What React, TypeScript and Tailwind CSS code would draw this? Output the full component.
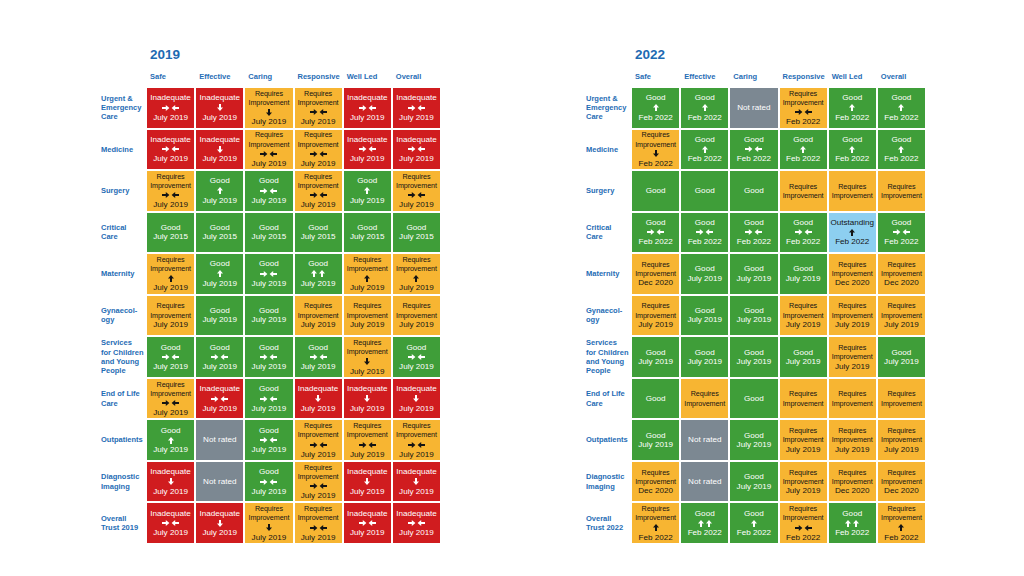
import React from 'react';

type Rating = 'I' | 'R' | 'G' | 'N' | 'O';
type Arrow = 'same' | 'up' | 'down' | 'up2' | '';
type CellData = [Rating, Arrow?, string?];

const headers = ['Safe', 'Effective', 'Caring', 'Responsive', 'Well Led', 'Overall'];

const labels2019 = [
  'Urgent &\nEmergency\nCare',
  'Medicine',
  'Surgery',
  'Critical\nCare',
  'Maternity',
  'Gynaecol-\nogy',
  'Services\nfor Children\nand Young\nPeople',
  'End of Life\nCare',
  'Outpatients',
  'Diagnostic\nImaging',
  'Overall\nTrust 2019',
];

const labels2022 = [...labels2019.slice(0, 10), 'Overall\nTrust 2022'];

const J19 = 'July 2019';
const F22 = 'Feb 2022';
const D20 = 'Dec 2020';

const grid2019: CellData[][] = [
  [['I', 'same', J19], ['I', 'down', J19], ['R', 'down', J19], ['R', 'same', J19], ['I', 'same', J19], ['I', 'same', J19]],
  [['I', 'same', J19], ['I', 'down', J19], ['R', 'same', J19], ['R', 'same', J19], ['I', 'same', J19], ['I', 'same', J19]],
  [['R', 'same', J19], ['G', 'up', J19], ['G', 'same', J19], ['R', 'same', J19], ['G', 'up', J19], ['R', 'same', J19]],
  [['G', '', 'July 2015'], ['G', '', 'July 2015'], ['G', '', 'July 2015'], ['G', '', 'July 2015'], ['G', '', 'July 2015'], ['G', '', 'July 2015']],
  [['R', 'up', J19], ['G', 'up', J19], ['G', 'same', J19], ['G', 'up2', J19], ['R', 'up', J19], ['R', 'up', J19]],
  [['R', '', J19], ['G', '', J19], ['G', '', J19], ['R', '', J19], ['R', '', J19], ['R', '', J19]],
  [['G', 'same', J19], ['G', 'same', J19], ['G', 'same', J19], ['G', 'same', J19], ['R', 'down', J19], ['G', 'same', J19]],
  [['R', 'same', J19], ['I', 'same', J19], ['G', 'same', J19], ['I', 'down', J19], ['I', 'down', J19], ['I', 'down', J19]],
  [['G', 'up', J19], ['N'], ['G', 'same', J19], ['R', 'same', J19], ['R', 'same', J19], ['R', 'same', J19]],
  [['I', 'down', J19], ['N'], ['G', 'same', J19], ['R', 'same', J19], ['I', 'down', J19], ['I', 'down', J19]],
  [['I', 'same', J19], ['I', 'down', J19], ['R', 'down', J19], ['R', 'same', J19], ['I', 'same', J19], ['I', 'same', J19]],
];

const grid2022: CellData[][] = [
  [['G', 'up', F22], ['G', 'up', F22], ['N'], ['R', 'same', F22], ['G', 'up', F22], ['G', 'up', F22]],
  [['R', 'down', F22], ['G', 'up', F22], ['G', 'same', F22], ['G', 'up', F22], ['G', 'up', F22], ['G', 'up', F22]],
  [['G'], ['G'], ['G'], ['R'], ['R'], ['R']],
  [['G', 'same', F22], ['G', 'same', F22], ['G', 'same', F22], ['G', 'same', F22], ['O', 'up', F22], ['G', 'same', F22]],
  [['R', '', D20], ['G', '', J19], ['G', '', J19], ['G', '', J19], ['R', '', D20], ['R', '', D20]],
  [['R', '', J19], ['G', '', J19], ['G', '', J19], ['R', '', J19], ['R', '', J19], ['R', '', J19]],
  [['G', '', J19], ['G', '', J19], ['G', '', J19], ['G', '', J19], ['R', '', J19], ['G', '', J19]],
  [['G'], ['R'], ['G'], ['R'], ['R'], ['R']],
  [['G', '', J19], ['N'], ['G', '', J19], ['R', '', J19], ['R', '', J19], ['R', '', J19]],
  [['R', '', D20], ['N'], ['G', '', J19], ['R', '', J19], ['R', '', D20], ['R', '', D20]],
  [['R', 'up', F22], ['G', 'up2', F22], ['G', 'up', F22], ['R', 'same', F22], ['G', 'up2', F22], ['R', 'up', F22]],
];

const ratingStyle: Record<Rating, string> = {
  I: 'bg-[#d01c1f] text-white',
  R: 'bg-[#f7b532] text-[#141414]',
  G: 'bg-[#3f9e39] text-white',
  N: 'bg-[#7c8892] text-white',
  O: 'bg-[#8dcff0] text-[#141414]',
};

const ratingText: Record<Rating, string> = {
  I: 'Inadequate',
  R: 'Requires Improvement',
  G: 'Good',
  N: 'Not rated',
  O: 'Outstanding',
};

function TrendArrow({ kind }: { kind: Arrow }) {
  if (kind === 'same') {
    return (
      <svg width="17" height="6" viewBox="0 0 17 6" fill="currentColor">
        <path d="M0 2H3.8V0L7.4 3L3.8 6V4H0Z" />
        <path d="M17 2H13.2V0L9.6 3L13.2 6V4H17Z" />
      </svg>
    );
  }
  if (kind === 'up' || kind === 'down') {
    return (
      <svg width="6" height="7" viewBox="0 0 6 7" fill="currentColor" className={kind === 'down' ? 'rotate-180' : ''}>
        <path d="M2 7V3.4H0L3 0L6 3.4H4V7Z" />
      </svg>
    );
  }
  if (kind === 'up2') {
    return (
      <svg width="14" height="7" viewBox="0 0 14 7" fill="currentColor">
        <path d="M2 7V3.4H0L3 0L6 3.4H4V7Z" />
        <path d="M10 7V3.4H8L11 0L14 3.4H12V7Z" />
      </svg>
    );
  }
  return null;
}

function RatingCell({ data }: { data: CellData }) {
  const [rating, arrow, date] = data;
  return (
    <div className={`flex flex-col items-center justify-center text-center leading-[9.5px] text-[8.1px] ${ratingStyle[rating]}`}>
      {rating === 'R' ? (
        <div className="text-[7.2px] leading-[9.3px] tracking-[-0.1px]">
          <div>Requires</div>
          <div>Improvement</div>
        </div>
      ) : (
        <div>{ratingText[rating]}</div>
      )}
      {arrow ? (
        <div className="h-[10px] flex items-center justify-center">
          <TrendArrow kind={arrow} />
        </div>
      ) : null}
      {date ? <div>{date}</div> : null}
    </div>
  );
}

function RatingsBlock({ year, labels, rows }: { year: string; labels: string[]; rows: CellData[][] }) {
  return (
    <div className="w-[339px] shrink-0">
      <div className="pl-[49px] text-[13.5px] leading-[16px] font-bold text-[#1e6ab2]">{year}</div>
      <div className="mt-[9px] grid grid-cols-[44px_repeat(6,minmax(0,1fr))] gap-x-[2px] h-[10px]">
        <div />
        {headers.map((h) => (
          <div key={h} className="pl-[3px] text-[7.5px] leading-[10px] font-bold text-[#1f6db5] whitespace-nowrap">
            {h}
          </div>
        ))}
      </div>
      <div className="mt-[6px] grid grid-cols-[44px_repeat(6,minmax(0,1fr))] grid-rows-[repeat(11,minmax(0,1fr))] gap-x-[2px] gap-y-[2px] h-[455px]">
        {rows.map((row, i) => (
          <React.Fragment key={i}>
            <div className="self-center whitespace-pre-line text-[7.5px] leading-[9.3px] font-bold text-[#1f6db5]">
              {labels[i]}
            </div>
            {row.map((c, j) => (
              <RatingCell key={j} data={c} />
            ))}
          </React.Fragment>
        ))}
      </div>
    </div>
  );
}

export default function App() {
  return (
    <div className="w-[1024px] h-[576px] bg-white flex gap-[146px] pl-[101px] pt-[47px] font-['Liberation_Sans',Arial,sans-serif]">
      <RatingsBlock year="2019" labels={labels2019} rows={grid2019} />
      <RatingsBlock year="2022" labels={labels2022} rows={grid2022} />
    </div>
  );
}
